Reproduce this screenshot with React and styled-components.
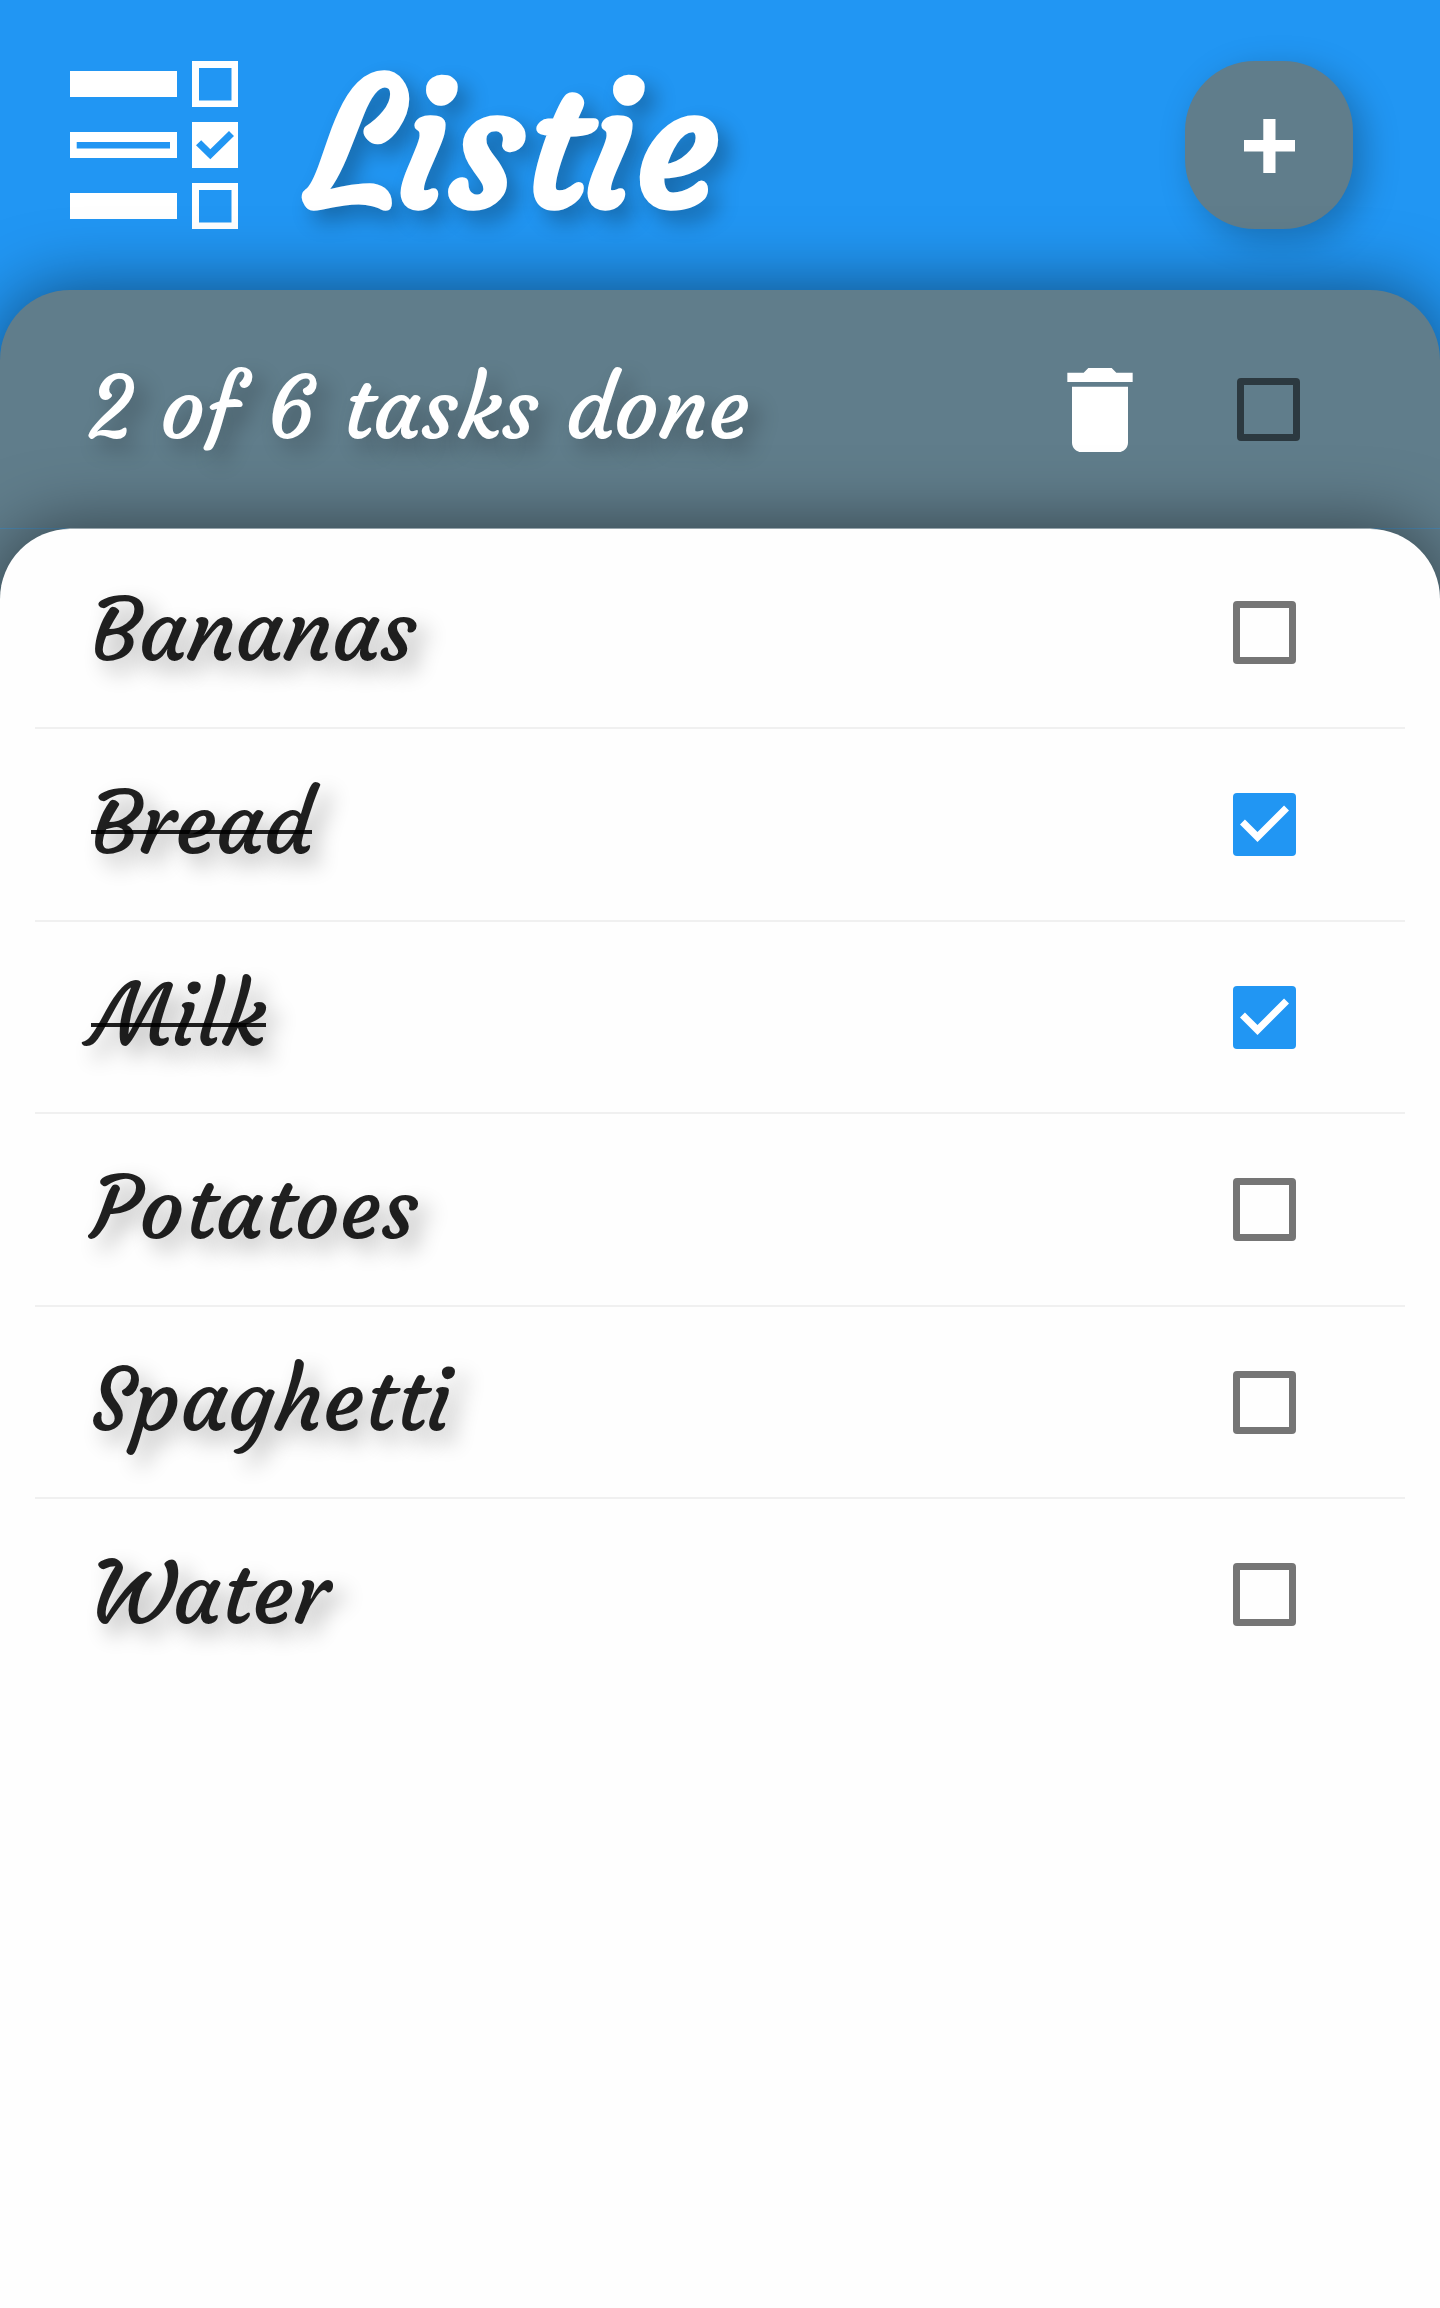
import React, { useState } from "react";
import styled, { createGlobalStyle } from "styled-components";

const script = `"Courgette", Lato, "Open Sans", sans-serif`;

const GlobalStyle = createGlobalStyle`
  *, *::before, *::after { box-sizing: border-box; }
  body { margin: 0; background: #2196f3; font-family: ${script}; }
  button { font: inherit; border: 0; padding: 0; background: none; cursor: pointer; }
`;

const Page = styled.div`
  display: flex;
  flex-direction: column;
  width: 1440px;
  height: 2308px;
  overflow: hidden;
  background: #2196f3;
`;

const Header = styled.header`
  display: flex;
  align-items: center;
  height: 290px;
  flex: none;
  padding: 0 87px 0 70px;
`;

const Logo = styled.svg`
  display: block;
  flex: none;
  width: 168px;
  height: 168px;
`;

const Title = styled.h1`
  flex: 1;
  margin: 0;
  padding: 2px 0 0 70px;
  color: #fff;
  font-size: 175px;
  font-weight: 700;
  line-height: 220px;
  text-shadow: 10.5px 10.5px 21px rgba(0, 0, 0, 0.3);
`;

const AddButton = styled.button`
  display: flex;
  align-items: center;
  justify-content: center;
  flex: none;
  width: 168px;
  height: 168px;
  border-radius: 70px;
  background: #607d8b;
  box-shadow: 10.5px 10.5px 35px rgba(0, 0, 0, 0.25);
`;

const PlusIcon = styled.svg`
  display: block;
  width: 56px;
  height: 56px;
`;

const Panel = styled.main`
  display: flex;
  flex: 1;
  flex-direction: column;
  border-radius: 70px 70px 0 0;
  background: #607d8b;
  box-shadow: 0 0 70px rgba(0, 0, 0, 0.5);
`;

const StatusBar = styled.div`
  display: flex;
  align-items: center;
  flex: none;
  height: 238px;
  padding: 1px 130px 0 87.5px;
`;

const StatusText = styled.p`
  flex: 1;
  margin: 0;
  padding-bottom: 2px;
  color: #fff;
  font-size: 87.5px;
  line-height: 110px;
  white-space: nowrap;
  text-shadow: 10.5px 10.5px 21px rgba(0, 0, 0, 0.3);
`;

const DeleteButton = styled.button`
  flex: none;
  width: 112px;
  height: 112px;
  margin-right: 81px;
  color: #fff;
`;

const DeleteIcon = styled.svg`
  display: block;
  width: 112px;
  height: 112px;
`;

const Seam = styled.div`
  flex: none;
  height: 1px;
  background: linear-gradient(90deg, #4c86ae 64px, #c8dae3 70px, #c8dae3 1370px, #4c86ae 1376px);
`;

const Card = styled.ul`
  flex: 1;
  margin: 0;
  padding: 7.5px 35px 0;
  list-style: none;
  border-radius: 70px 70px 0 0;
  background: #fefefe;
  box-shadow: 0 0 70px rgba(0, 0, 0, 0.5);
`;

const Row = styled.li`
  display: flex;
  align-items: center;
  justify-content: space-between;
  height: 192.5px;
  padding: 0 99px 0 56px;
  border-bottom: 2px solid #f0f0f0;

  &:last-child { border-bottom-color: transparent; }
`;

const Label = styled.span`
  position: relative;
  margin-bottom: 1px;
  color: rgba(0, 0, 0, 0.87);
  font-size: 87.5px;
  line-height: 110px;
  text-shadow: 10.5px 10.5px 21px rgba(0, 0, 0, 0.3);

  &::after {
    content: "";
    display: ${(p) => (p.$done ? "block" : "none")};
    position: absolute;
    top: 61.25px;
    left: 0;
    right: 0;
    height: 4px;
    background: rgba(0, 0, 0, 0.87);
  }
`;

const Check = styled.button.attrs({ role: "checkbox", type: "button" })`
  display: flex;
  align-items: center;
  justify-content: center;
  flex: none;
  width: 63px;
  height: 63px;
  margin: 0.6px 10px 0 0;
  border: ${(p) => (p["aria-checked"] ? "0" : "7px solid rgba(0, 0, 0, 0.54)")};
  border-radius: 4px;
  background: ${(p) => (p["aria-checked"] ? "#2196f3" : "transparent")};
`;

const Tick = styled.svg`
  display: block;
  width: 63px;
  height: 63px;
`;

function Checkbox({ checked, label, onChange }) {
  return (
    <Check aria-checked={checked} aria-label={label} onClick={onChange}>
      {checked && (
        <Tick viewBox="3 3 18 18">
          <path d="M10 17l-5-5 1.41-1.41L10 14.17l7.59-7.59L19 8z" fill="#fff" />
        </Tick>
      )}
    </Check>
  );
}

const initialTasks = [
  { name: "Bananas", done: false },
  { name: "Bread", done: true },
  { name: "Milk", done: true },
  { name: "Potatoes", done: false },
  { name: "Spaghetti", done: false },
  { name: "Water", done: false },
];

export default function App() {
  const [tasks, setTasks] = useState(initialTasks);
  const doneCount = tasks.filter((t) => t.done).length;
  const allDone = tasks.length > 0 && doneCount === tasks.length;

  const toggle = (name) =>
    setTasks(tasks.map((t) => (t.name === name ? { ...t, done: !t.done } : t)));

  return (
    <Page>
      <GlobalStyle />
      <Header>
        <Logo viewBox="0 0 168 168" fill="#fff">
          <path d="M0 10h107v26H0z" />
          <path d="M0 71h107v26H0zM6.7 81v6.5h93.3v-6.5z" fillRule="evenodd" />
          <path d="M0 132h107v26H0z" />
          <path d="M122 0h46v46h-46zM129 7v32.5h32.5V7z" fillRule="evenodd" />
          <path d="M122 61h46v46h-46z" />
          <path d="M122 122h46v46h-46zM129 129v32.5h32.5V129z" fillRule="evenodd" />
          <path d="M126 84.3l5.2-5 9.1 8.9L159 70l5 5-23.7 23.3z" fill="#2196f3" />
        </Logo>
        <Title>Listie</Title>
        <AddButton type="button" aria-label="Add task">
          <PlusIcon viewBox="0 0 56 56" fill="#fff">
            <path d="M3 23h19.3V2h12.2v21H54v11.5H34.5V57H22.3V34.5H3z" />
          </PlusIcon>
        </AddButton>
      </Header>
      <Panel>
        <StatusBar>
          <StatusText>{`${doneCount} of ${tasks.length} tasks done`}</StatusText>
          <DeleteButton
            type="button"
            aria-label="Delete done tasks"
            onClick={() => setTasks(tasks.filter((t) => !t.done))}
          >
            <DeleteIcon viewBox="0 0 24 24" fill="currentColor">
              <path d="M6 19c0 1.1.9 2 2 2h8c1.1 0 2-.9 2-2V7H6v12zM19 4h-3.5l-1-1h-5l-1 1H5v2h14V4z" />
            </DeleteIcon>
          </DeleteButton>
          <Checkbox
            checked={allDone}
            label="All tasks"
            onChange={() => setTasks(tasks.map((t) => ({ ...t, done: !allDone })))}
          />
        </StatusBar>
        <Seam />
        <Card>
          {tasks.map((t) => (
            <Row key={t.name}>
              <Label $done={t.done}>{t.name}</Label>
              <Checkbox checked={t.done} label={t.name} onChange={() => toggle(t.name)} />
            </Row>
          ))}
        </Card>
      </Panel>
    </Page>
  );
}
